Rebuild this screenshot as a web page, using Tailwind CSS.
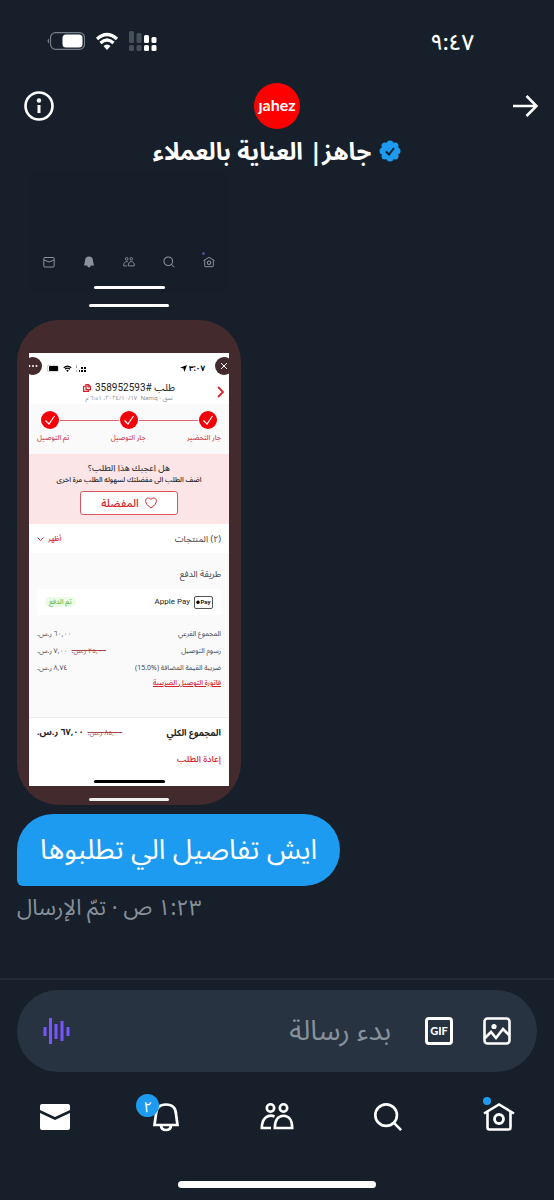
<!DOCTYPE html>
<html lang="ar" dir="rtl">
<head>
    <meta charset="UTF-8">
    <meta name="viewport" content="width=device-width, initial-scale=1.0">
    <title>جاهز | العناية بالعملاء</title>
    <script src="https://cdn.jsdelivr.net/npm/@tailwindcss/browser@4"></script>
</head>
<body class="bg-[#17202a] text-white font-['Noto_Sans','Noto_Sans_Arabic','DejaVu_Sans',sans-serif]">
    <!-- shared icons -->
    <svg class="hidden">
        <symbol id="home" viewBox="0 0 32 32">
            <path d="M1 12.500 16 3.500l15 9M4.500 11v15.500q0 2 2 2h19q2 0 2-2V11" fill="none" stroke="currentColor" stroke-width="2.600"/>
            <circle cx="16" cy="18" r="4.500" fill="none" stroke="currentColor" stroke-width="2.800"/>
        </symbol>
        <symbol id="search" viewBox="0 0 32 32">
            <circle cx="14" cy="14" r="11.500" fill="none" stroke="currentColor" stroke-width="2.800"/>
            <path d="m22 22 8 8" stroke="currentColor" stroke-width="2.800"/>
        </symbol>
        <symbol id="people" viewBox="0 0 34 32">
            <g fill="none" stroke="currentColor" stroke-width="2.600">
                <circle cx="10.500" cy="7" r="3.700"/>
                <circle cx="23.500" cy="7" r="3.700"/>
                <path d="M14.500 15.500C8 12.500 1.800 17.500 1.800 27H11M14.800 27c0-8 3.500-12.300 8.700-12.300S32.200 19 32.200 27z"/>
            </g>
        </symbol>
        <symbol id="wifi" viewBox="0 0 24 18">
            <path d="M2 7q10-9 20 0M5.500 11q6.500-6 13 0" fill="none" stroke="currentColor" stroke-width="3.200"/>
            <path d="M8.500 14q3.500-3 7 0L12 18z" fill="currentColor"/>
        </symbol>
        <symbol id="tick" viewBox="0 0 18 18">
            <circle cx="9" cy="9" r="9" fill="#f40009"/>
            <path d="m4.500 9.500 3.500 3.500 5.500-8" fill="none" stroke="#fff" stroke-width="1.200"/>
        </symbol>
    </svg>

    <div class="flex min-h-screen flex-col">
        <header>
            <!-- status bar -->
            <div class="flex h-[82px] items-center justify-between pr-20 pl-[47px]">
                <span class="text-[22px] font-medium">٩:٤٧</span>
                <div dir="ltr" class="flex items-center gap-[10px]">
                    <svg class="h-[18px] w-[38px]" viewBox="0 0 38 18">
                        <path d="M2 6.500q-3 2.500 0 5z" fill="#76808a"/>
                        <rect x="3.500" y=".7" width="34" height="16.600" rx="5" fill="none" stroke="#76808a" stroke-width="1.200"/>
                        <rect x="15.500" y="2.500" width="20" height="13" rx="3.500" fill="#fff"/>
                    </svg>
                    <svg class="h-[18px] w-6"><use href="#wifi"/></svg>
                    <svg class="h-5 w-7" viewBox="0 0 28 20">
                        <g fill="#46505b">
                            <rect x="0" y="0" width="5" height="12" rx="1.500"/><rect x="7.500" y="2" width="5" height="10" rx="1.500"/>
                            <rect x="0" y="14" width="5" height="6" rx="1.500"/><rect x="7.500" y="14" width="5" height="6" rx="1.500"/>
                        </g>
                        <g fill="#fff">
                            <rect x="15" y="4" width="5" height="8" rx="1.500"/><rect x="22.500" y="6" width="5" height="6" rx="1.500"/>
                            <rect x="15" y="14" width="5" height="6" rx="1.500"/><rect x="22.500" y="14" width="5" height="6" rx="1.500"/>
                        </g>
                    </svg>
                </div>
            </div>

            <!-- back, avatar, info -->
            <div class="grid h-12 grid-cols-3 items-center">
                <button type="button" aria-label="رجوع" class="mr-4 justify-self-start">
                    <svg class="h-6 w-[26px]" viewBox="0 0 26 24" fill="none" stroke="#fff" stroke-width="2.600"><path d="M1 12h23M14.500 2 24.500 12 14.500 22"/></svg>
                </button>
                <div class="flex h-[46px] w-[46px] items-center justify-center justify-self-center rounded-full bg-[#fe0000] pb-[2px]">
                    <span dir="ltr" class="font-[Lato,sans-serif] text-[16px] leading-4 font-bold">ȷ<span class="relative">a<span class="absolute top-[10px] left-[3px] h-[3px] w-[3px] rounded-full bg-[#f5a623]"></span></span>hez</span>
                </div>
                <button type="button" aria-label="معلومات" class="ml-6 justify-self-end">
                    <svg class="h-[30px] w-[30px]" viewBox="0 0 30 30">
                        <circle cx="15" cy="15" r="13.500" fill="none" stroke="#fff" stroke-width="2.600"/>
                        <circle cx="15" cy="9.500" r="2.200" fill="#fff"/><path d="M15 14v8" stroke="#fff" stroke-width="3"/>
                    </svg>
                </button>
            </div>
            <div class="flex h-[42px] items-center justify-center gap-2">
                <svg class="h-[22px] w-[22px]" viewBox="0 0 22 22">
                    <g fill="#1d9bf0">
                        <circle cx="11" cy="11" r="8"/>
                        <circle cx="11" cy="4" r="3.500"/><circle cx="16" cy="6" r="3.500"/><circle cx="18" cy="11" r="3.500"/><circle cx="16" cy="16" r="3.500"/>
                        <circle cx="11" cy="18" r="3.500"/><circle cx="6" cy="16" r="3.500"/><circle cx="4" cy="11" r="3.500"/><circle cx="6" cy="6" r="3.500"/>
                    </g>
                    <path d="m7 11.500 3 3 5-6.500" fill="none" stroke="#17202a" stroke-width="2"/>
                </svg>
                <h1 class="text-[24px] leading-8 font-bold whitespace-nowrap">جاهز| العناية بالعملاء</h1>
            </div>
        </header>

        <main class="flex flex-1 flex-col items-end px-[17px]">
            <!-- image attachment -->
            <div class="flex w-56 flex-col items-center">
                <div class="flex h-[121px] w-[200px] flex-col items-center justify-end bg-[#161f29]">
                    <div class="mb-[18px] grid w-full grid-cols-5 justify-items-center text-[#8b929b]">
                        <span class="relative">
                            <svg class="h-3 w-3"><use href="#home"/></svg>
                            <span class="absolute -top-1 -left-px h-[3px] w-[3px] rounded-full bg-[#4a4f8f]"></span>
                        </span>
                        <svg class="h-3 w-3"><use href="#search"/></svg>
                        <svg class="h-3 w-3"><use href="#people"/></svg>
                        <svg class="h-3 w-3" viewBox="0 0 12 12" fill="currentColor"><path d="M1 9.500 2 5q0-4.500 4-4.500T10 5l1 4.500H8q-2 4-4 0z"/></svg>
                        <svg class="h-3 w-3" viewBox="0 0 12 12" fill="none" stroke="currentColor"><rect x=".8" y="1.500" width="10.400" height="9.500" rx="1"/><path d="m1 4 5 2 5-2"/></svg>
                    </div>
                    <div class="mb-1 h-[3px] w-[71px] rounded-full bg-white"></div>
                </div>
                <div class="mt-[11px] h-[3px] w-20 rounded-full bg-white"></div>

                <div class="mt-[13px] w-full rounded-[42px] bg-[#432b2d] px-3 pt-[33px] pb-1">
                    <div class="relative overflow-hidden bg-white text-[8px] leading-3 text-[#444]">
                        <div class="absolute top-1 -right-1 flex h-[18px] w-[18px] items-center justify-center rounded-full bg-[#432b2d]">
                            <svg class="h-2 w-2" viewBox="0 0 8 8" stroke="#fff"><path d="m1 1 6 6M7 1 1 7"/></svg>
                        </div>
                        <div class="absolute top-1 -left-[5px] flex h-[18px] w-[18px] items-center justify-center rounded-full bg-[#432b2d]">
                            <svg class="h-1 w-[10px]" viewBox="0 0 10 4" fill="#fff"><circle cx="1.500" cy="2" r="1"/><circle cx="5" cy="2" r="1"/><circle cx="8.500" cy="2" r="1"/></svg>
                        </div>

                        <div class="flex h-[30px] items-center justify-between pr-6 pl-[18px] text-black">
                            <span class="flex items-center gap-[2px] font-bold">٣:٠٧
                                <svg class="h-[7px] w-[7px]" viewBox="0 0 8 8"><path d="M8 0 5 8 4 4 0 3z"/></svg>
                            </span>
                            <span dir="ltr" class="flex items-center gap-1">
                                <svg class="h-[7px] w-3" viewBox="0 0 12 7"><rect x=".3" y=".3" width="11.400" height="6.400" rx="2" fill="none" stroke="#aaa" stroke-width=".6"/><rect x="2" y="1" width="9" height="5" rx="1"/></svg>
                                <svg class="h-[7px] w-[9px]"><use href="#wifi"/></svg>
                                <svg class="h-[7px] w-[10px]" viewBox="0 0 10 7"><path d="M0 0h1v3H0zM0 5h1v2H0z" fill="#aaa"/><path d="M3 5h1v2H3zM5 2h2v2H5zM5 5h2v2H5zM8 2h2v2H8zM8 5h2v2H8z"/></svg>
                            </span>
                        </div>
                        <div class="relative flex h-[21px] flex-col items-center">
                            <div class="-mt-[3px] flex items-center gap-1 text-[10px] leading-[14px] text-[#222]">
                                <span>طلب <span class="font-[Roboto,sans-serif]">#358952593</span></span>
                                <svg class="h-2 w-2" viewBox="0 0 8 8" fill="none" stroke="#d8222a" stroke-width="1.200"><path d="M3 .6h2.500l2 2v3h-4.500zM5 1v2h2M2.500 2 .6 2.500V7.400H5.500V6"/></svg>
                            </div>
                            <div class="text-[6px] leading-[7px] text-[#888]">نمق - Namq &nbsp;٢٠٢٤/١٠/١٧، ٦:٥١ م</div>
                            <svg class="absolute top-[3px] right-1 h-3 w-2" viewBox="0 0 8 12" fill="none" stroke="#d8222a" stroke-width="1.800"><path d="m1 1 5 5-5 5"/></svg>
                        </div>

                        <!-- delivery steps -->
                        <div class="h-[50px] bg-[#fafafa] px-3 pt-[7px]">
                            <div class="flex items-center gap-px">
                                <svg class="h-[18px] w-[18px]"><use href="#tick"/></svg>
                                <span class="h-px flex-1 bg-[#dd6a70]"></span>
                                <svg class="h-[18px] w-[18px]"><use href="#tick"/></svg>
                                <span class="h-px flex-1 bg-[#dd6a70]"></span>
                                <svg class="h-[18px] w-[18px]"><use href="#tick"/></svg>
                            </div>
                            <div class="-mx-1 mt-[3px] flex justify-between text-[7px] leading-3 font-medium text-[#d0454b]">
                                <span>جار التحضير</span><span>جار التوصيل</span><span>تم التوصيل</span>
                            </div>
                        </div>

                        <div class="flex h-[70px] flex-col items-center bg-[#fbe5e6] pt-2 text-[#222]">
                            <p class="text-[9px] leading-3">هل اعجبك هذا الطلب؟</p>
                            <p class="text-[7px] leading-3 font-medium">اضف الطلب الى مفضلتك لسهوله الطلب مرة اخرى</p>
                            <button type="button" class="mt-[5px] flex h-6 w-[98px] items-center justify-center gap-[6px] rounded-[3px] border border-[#d9565d] bg-white text-[11px] leading-4 font-medium text-[#d8222a]">
                                <svg class="h-3 w-3" viewBox="0 0 12 12" fill="none" stroke="currentColor"><path d="M6 11C-2 5.500.5 1 3.300 1 5 1 6 2.500 6 2.500S7 1 8.700 1C11.500 1 14 5.500 6 11z"/></svg>
                                المفضلة
                            </button>
                        </div>

                        <div class="flex h-[29px] items-center justify-between px-2">
                            <span class="text-[9px]">(٢) المنتجات</span>
                            <button type="button" class="flex items-center gap-1 text-[7px] font-medium text-[#d8222a]">أظهر
                                <svg class="h-1 w-[7px]" viewBox="0 0 7 4" fill="none" stroke="currentColor"><path d="m.5.5 3 3 3-3"/></svg>
                            </button>
                        </div>

                        <!-- payment -->
                        <div class="h-[165px] border-b border-[#eee] bg-[#fafafa] px-2 pt-[14px] text-[7px]">
                            <h2 class="text-[9px] leading-[14px]">طريقة الدفع</h2>
                            <div class="mt-2 flex h-[26px] items-center justify-between bg-white px-2">
                                <span class="flex items-center gap-1 font-[Roboto,sans-serif] text-[8px] text-[#222]">
                                    <span dir="ltr" class="flex h-[13px] w-[19px] items-center justify-center rounded-[2px] border border-[#555] text-[6px] font-bold">
                                        <svg class="h-1 w-1" viewBox="0 0 4 4"><circle cx="2" cy="2.300" r="1.700"/><path d="M2 1q0-1 1-1z"/></svg>Pay
                                    </span>
                                    <bdi>Apple Pay</bdi>
                                </span>
                                <span class="rounded-full bg-[#ebfbe6] px-1 leading-[10px] font-medium text-[#5fbf4e]">تم الدفع</span>
                            </div>
                            <dl class="mt-[10px] leading-[17px]">
                                <div class="flex justify-between"><dt>المجموع الفرعي</dt><dd>٦٠,٠٠ ر.س.</dd></div>
                                <div class="flex justify-between"><dt>رسوم التوصيل</dt><dd><s class="ml-1 text-[#a8444a]">٢٥,٠٠ ر.س.</s>٧,٠٠ ر.س.</dd></div>
                                <div class="flex justify-between"><dt>ضريبة القيمة المضافة (<bdi>15.0%</bdi>)</dt><dd>٨,٧٤ ر.س.</dd></div>
                            </dl>
                            <a href="#" class="block leading-[14px] font-medium text-[#d8222a] underline">فاتورة التوصيل الضريبية</a>
                        </div>

                        <div class="h-[68px] px-2 pt-[6px]">
                            <div class="flex items-center justify-between text-[9px] leading-4 font-bold text-[#222]">
                                <span>المجموع الكلي</span>
                                <span><s class="ml-1 text-[7px] font-normal text-[#a8444a]">٨٥,٠٠ ر.س.</s>٦٧,٠٠ ر.س.</span>
                            </div>
                            <a href="#" class="mt-[10px] block text-[9px] leading-4 font-medium text-[#d8222a]">إعادة الطلب</a>
                            <div class="mx-auto mt-[13px] h-[3px] w-[71px] rounded-full bg-black"></div>
                        </div>
                    </div>
                    <div class="mx-auto mt-3 h-[3px] w-20 rounded-full bg-[#eee]"></div>
                </div>
            </div>

            <div class="mt-[9px] flex h-[72px] items-center rounded-[36px] rounded-bl-[6px] bg-[#1d9bf0] px-[23px]">
                <p class="pb-1 text-[28px] leading-9 whitespace-nowrap">ايش تفاصيل الي تطلبوها</p>
            </div>
            <p class="mt-1 text-[22px] leading-8 whitespace-nowrap text-[#87919c]">١:٢٣ ص · تمّ الإرسال</p>
        </main>

        <footer class="border-t-2 border-[#232e3a] pt-[10px]">
            <form class="mx-[17px] flex h-[82px] items-center rounded-full bg-[#273340] px-[26px]">
                <button type="button" aria-label="صورة">
                    <svg class="h-7 w-7" viewBox="0 0 28 28" fill="none" stroke="#fff" stroke-width="2.600">
                        <rect x="1.500" y="1.500" width="25" height="25" rx="3"/><circle cx="11" cy="9.500" r="2.600" fill="#fff" stroke="none"/>
                        <path d="m2 21 6-6 5 6 7-9 6 6"/>
                    </svg>
                </button>
                <button type="button" aria-label="GIF" class="mr-[30px] flex h-7 w-7 items-center justify-center rounded-[4px] border-[3px] border-white font-[Lato,sans-serif] text-[11px] leading-4 font-black">GIF</button>
                <input type="text" aria-label="بدء رسالة" placeholder="بدء رسالة" class="mr-[34px] h-12 min-w-0 flex-1 bg-transparent pb-1 text-[28px] outline-none placeholder:text-[#87919c]">
                <button type="button" aria-label="رسالة صوتية">
                    <svg class="h-7 w-[27px]" viewBox="0 0 27 28" stroke="#7856ff" stroke-width="3"><path d="M2 10v9M7.500 1v26M13 7v15M19 4v20M25 10v9"/></svg>
                </button>
            </form>

            <nav class="grid h-[90px] grid-cols-5 items-center justify-items-center">
                <a href="#" aria-label="الرئيسية" class="relative">
                    <svg class="h-8 w-8"><use href="#home"/></svg>
                    <span class="absolute -top-1 left-0 h-2 w-2 rounded-full bg-[#1d9bf0]"></span>
                </a>
                <a href="#" aria-label="بحث"><svg class="h-[30px] w-[30px]"><use href="#search"/></svg></a>
                <a href="#" aria-label="المجتمعات"><svg class="h-8 w-[34px]"><use href="#people"/></svg></a>
                <a href="#" aria-label="الإشعارات" class="relative">
                    <svg class="h-[30px] w-7" viewBox="0 0 28 30" fill="none" stroke="#fff" stroke-width="2.700">
                        <path d="M2.500 23 4 12Q4.500 2.500 14 2.500T24 12l1.500 11zM9 23q0 5 5 5t5-5"/>
                    </svg>
                    <span class="absolute -top-2 -left-4 flex h-[23px] w-[23px] items-center justify-center rounded-full bg-[#1d9bf0] text-[15px] leading-5">٢</span>
                </a>
                <a href="#" aria-label="الرسائل">
                    <svg class="h-7 w-[30px]" viewBox="0 0 30 28" fill="#fff"><path d="M0 7V3q0-2 2-2h26q2 0 2 2v4l-15 7zM0 10l15 7 15-7v15q0 2-2 2H2q-2 0-2-2z"/></svg>
                </a>
            </nav>
            <div class="mx-auto mt-[19px] mb-3 h-[7px] w-[198px] rounded-full bg-white"></div>
        </footer>
    </div>
</body>
</html>
